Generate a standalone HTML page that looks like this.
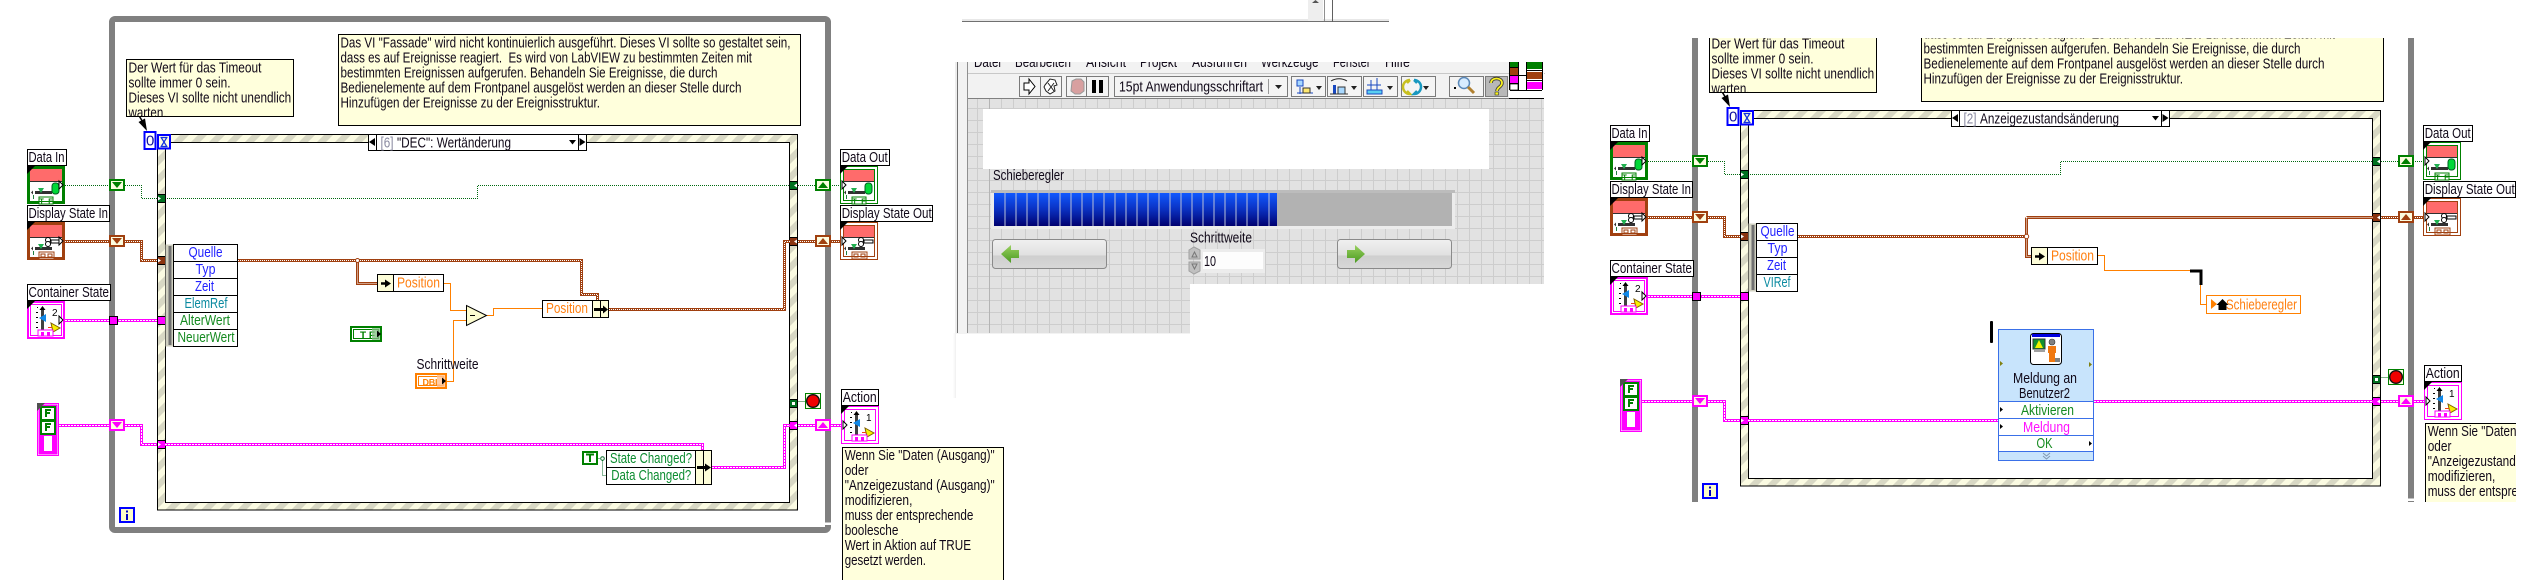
<!DOCTYPE html>
<html>
<head>
<meta charset="utf-8">
<style>
html,body{margin:0;padding:0;background:#fff;width:2547px;height:580px;overflow:hidden}
svg{display:block}
text{font-family:"Liberation Sans",sans-serif;font-size:15px;fill:#100818}
.b{fill:#2222ff}.t{fill:#0a8aa0}.g{fill:#158a20}.o{fill:#ff7f10}.gr{fill:#8888a0}.m{fill:#ff10ff}
.gt{fill:#0c8c30}
</style>
</head>
<body>
<svg xmlns="http://www.w3.org/2000/svg" width="2547" height="580" viewBox="0 0 2547 580">
<defs>
<pattern id="st" width="18" height="18" patternUnits="userSpaceOnUse">
<rect width="18" height="18" fill="#fbfbe2"/>
<polygon points="9,0 18,0 0,18 0,9" fill="#d8d8c4"/>
<polygon points="18,9 18,18 9,18" fill="#d8d8c4"/>
</pattern>
<pattern id="grid" width="12" height="12" patternUnits="userSpaceOnUse" x="965" y="0">
<rect width="12" height="12" fill="#e2e2e2"/>
<rect x="0" width="1" height="12" fill="#cdcdcd"/>
<rect y="0" width="12" height="1" fill="#cdcdcd"/>
</pattern>
<linearGradient id="blue" x1="0" y1="0" x2="0" y2="1"><stop offset="0" stop-color="#1058ff"/><stop offset=".5" stop-color="#0a30c0"/><stop offset="1" stop-color="#000070"/></linearGradient>
<linearGradient id="btn" x1="0" y1="0" x2="0" y2="1"><stop offset="0" stop-color="#f0f0f0"/><stop offset=".55" stop-color="#e0e0e0"/><stop offset=".56" stop-color="#cecece"/><stop offset="1" stop-color="#d8d8d8"/></linearGradient>
<linearGradient id="arr" x1="0" y1="0" x2="0" y2="1"><stop offset="0" stop-color="#9ad060"/><stop offset="1" stop-color="#4a9a20"/></linearGradient>
<linearGradient id="sh" x1="0" y1="0" x2="1" y2="0"><stop offset="0" stop-color="#fff"/><stop offset="1" stop-color="#f0f0f0"/></linearGradient>
<clipPath id="rc"><rect x="1600" y="38" width="916" height="464"/></clipPath>
<clipPath id="n1c"><rect x="126" y="59" width="168" height="57"/></clipPath>
<clipPath id="menu"><rect x="967" y="62" width="545" height="11"/></clipPath>

<g id="mech">
<rect x="3" y="3" width="32" height="12" fill="#ff6b6b"/>
<rect x="3" y="15" width="32" height="1" fill="#303030"/>
<rect x="8" y="25" width="17" height="3" fill="#303030"/>
<polygon points="11,22 17,22 14,27" fill="#20b050"/>
<polygon points="4,26.5 6,24.5 6,28.5" fill="#303030"/>
<rect x="6" y="29" width="1" height="4" fill="#208040"/>
</g>
<g id="dataIco">
<rect x="3" y="3" width="32" height="32" fill="#fff"/>
<use href="#mech"/>
<rect x="25" y="17" width="7" height="11" rx="3" fill="#00d838" stroke="#006020"/>
<rect x="12" y="31" width="14" height="7" fill="#fff" stroke="#008000"/>
<text x="12.5" y="37.5" style="font-size:7px;font-weight:bold;fill:#008000" textLength="13" lengthAdjust="spacing">T F</text>
</g>
<g id="stateIco">
<rect x="3" y="3" width="32" height="32" fill="#fff"/>
<use href="#mech"/>
<circle cx="21" cy="18" r="2.5" fill="#fff" stroke="#000"/>
<circle cx="21" cy="22" r="2.5" fill="#fff" stroke="#000"/>
<rect x="24" y="18" width="9" height="3" fill="#fff" stroke="#000"/>
<rect x="12" y="30" width="15" height="7" fill="#fff" stroke="#a04010"/>
<rect x="14" y="32" width="4" height="3" fill="none" stroke="#a04010"/><rect x="21" y="32" width="4" height="3" fill="none" stroke="#a04010"/>
</g>
<polygon id="corner" points="0,0 8,0 0,8" fill="#000"/>
<polygon id="inArr" points="0,0 4,4 0,8" fill="#fff" stroke="#000"/>

<g id="sliderIco">
<rect x="10" y="6" width="1" height="1" fill="#000"/><rect x="9" y="11" width="2" height="1" fill="#000"/><rect x="9" y="16" width="2" height="1" fill="#000"/><rect x="9" y="21" width="2" height="1" fill="#000"/><rect x="9" y="26" width="2" height="1" fill="#000"/>
<rect x="14" y="9" width="3" height="20" fill="#404040"/>
<polygon points="15.5,5 12.5,9 18.5,9" fill="#000"/>
<polygon points="12,17 19,13 19,21" fill="#1088e8"/>
<polygon points="24,22 33,27 26,31" fill="#f8f000" stroke="#806000"/>
<rect x="21" y="26" width="4" height="1" fill="#f04010"/>
<rect x="11" y="29" width="15" height="6" fill="#fff" stroke="#ff00ff"/>
<rect x="14" y="31" width="3" height="4" fill="#ff00ff"/><rect x="20" y="31" width="3" height="4" fill="#ff00ff"/>
</g>

<g id="common">
<rect x="112" y="19" width="716" height="511" rx="3" fill="none" stroke="#808080" stroke-width="6"/>
<rect x="824" y="522.5" width="8" height="2.5" fill="#fff"/>
<rect x="157.5" y="134.5" width="640" height="375.5" fill="url(#st)" stroke="#000"/>
<rect x="165.5" y="142.5" width="624" height="360" fill="#fff" stroke="#000"/>

<rect x="368.5" y="134.5" width="218" height="16" fill="#fff" stroke="#000"/>
<rect x="368.5" y="134.5" width="8" height="16" fill="#fff" stroke="#000"/>
<rect x="578.5" y="134.5" width="8" height="16" fill="#fff" stroke="#000"/>
<polygon points="369,142 375,138 375,146" fill="#000"/>
<polygon points="585.5,142 579.5,138 579.5,146" fill="#000"/>
<polygon points="569,140 576,140 572.5,144.5" fill="#000"/>

<rect x="144.5" y="132" width="11" height="17" fill="#fff" stroke="#0000ff" stroke-width="2"/>
<rect x="158" y="135" width="12" height="13.5" fill="#fdfde0" stroke="#0000ff" stroke-width="2"/>
<path d="M160.5 137.5h7M160.5 146.5h7M161.5 138l5 8M166.5 138l-5 8" stroke="#1030e0" stroke-width="1.2" fill="none"/>
<polygon points="138.5,122 145,118.5 147,131" fill="#000"/>
<path d="M139.5 116.5L144 124" stroke="#000" stroke-width="1.5"/>

<path d="M65 185.5H141.5V198.5H157M165 198.5H477.5V185.5H790M798 185.5H840" fill="none" stroke="#006810" stroke-dasharray="1 1"/>
<path d="M65 241.5H141.5V260.5H157M798 241.5H840" fill="none" stroke="#a04010" stroke-width="3"/>
<path d="M65 241.5H141.5V260.5H157M798 241.5H840" fill="none" stroke="#fff" stroke-dasharray="1 1"/>
<path d="M65 320.5H157M59 425.5H141.5V444.5H157M798 425.5H841" fill="none" stroke="#ff00ff" stroke-width="3"/>
<path d="M65 320.5H157M59 425.5H141.5V444.5H157M798 425.5H841" fill="none" stroke="#fff" stroke-dasharray="2 1"/>
<path d="M798.5 401.5H805" stroke="#006810" stroke-dasharray="1 1"/>

<rect x="110" y="180" width="14" height="10" fill="#fdfde0" stroke="#008000" stroke-width="2"/>
<polygon points="112,182 122,182 117,188" fill="#008000"/>
<rect x="110" y="236" width="14" height="10" fill="#fdfde0" stroke="#a04010" stroke-width="2"/>
<polygon points="112,238 122,238 117,244" fill="#a04010"/>
<rect x="110" y="420" width="14" height="10" fill="#fdfde0" stroke="#ff00ff" stroke-width="2"/>
<polygon points="112,422 122,422 117,428" fill="#ff00ff"/>
<rect x="109.5" y="316.5" width="8" height="8" fill="#ff00ff" stroke="#000"/>
<rect x="816" y="180" width="14" height="10" fill="#fdfde0" stroke="#008000" stroke-width="2"/>
<polygon points="818,188 828,188 823,182" fill="#008000"/>
<rect x="816" y="236" width="14" height="10" fill="#fdfde0" stroke="#a04010" stroke-width="2"/>
<polygon points="818,244 828,244 823,238" fill="#a04010"/>
<rect x="816" y="420" width="14" height="10" fill="#fdfde0" stroke="#ff00ff" stroke-width="2"/>
<polygon points="818,428 828,428 823,422" fill="#ff00ff"/>

<rect x="157.5" y="194.5" width="8" height="8" fill="#007020" stroke="#000"/><polygon points="158,196.5 161,198.5 158,200.5" fill="#fff"/>
<rect x="157.5" y="256.5" width="8" height="8" fill="#8a3410" stroke="#000"/><polygon points="158,258.5 161,260.5 158,262.5" fill="#fff"/>
<rect x="157.5" y="316.5" width="8" height="8" fill="#ff00ff" stroke="#000"/>
<rect x="157.5" y="440.5" width="8" height="8" fill="#ff00ff" stroke="#000"/><polygon points="158,442.5 161,444.5 158,446.5" fill="#fff"/>
<rect x="789.5" y="181.5" width="8" height="8" fill="#007020" stroke="#000"/><polygon points="797,183.5 794,185.5 797,187.5" fill="#fff"/>
<rect x="789.5" y="237.5" width="8" height="8" fill="#8a3410" stroke="#000"/><polygon points="797,239.5 794,241.5 797,243.5" fill="#fff"/>
<rect x="789.5" y="399.5" width="8" height="8" fill="#007020" stroke="#000"/><rect x="792" y="402" width="3" height="3" fill="#fff"/>
<rect x="789.5" y="421.5" width="8" height="8" fill="#ff00ff" stroke="#000"/><polygon points="797,423.5 794,425.5 797,427.5" fill="#fff"/>

<rect x="805.5" y="393.5" width="15" height="15" fill="#fdfde0" stroke="#008000"/>
<circle cx="813" cy="401" r="6.3" fill="#f00000" stroke="#101010" stroke-width="1.4"/>

<rect x="120" y="508" width="14" height="14" fill="#fdfdc8" stroke="#0000ff" stroke-width="2"/>
<rect x="126" y="514" width="2" height="6" fill="#0000c0"/><rect x="126" y="510.5" width="2" height="2" fill="#0000c0"/>

<rect x="27.5" y="149.5" width="39" height="16" fill="#fff" stroke="#000"/>
<rect x="27.5" y="205.5" width="82" height="16" fill="#fff" stroke="#000"/>
<rect x="27.5" y="284.5" width="83" height="16" fill="#fff" stroke="#000"/>
<rect x="840.5" y="149.5" width="49" height="16" fill="#fff" stroke="#000"/>
<rect x="840.5" y="205.5" width="92" height="16" fill="#fff" stroke="#000"/>
<rect x="841.5" y="389.5" width="37" height="16" fill="#fff" stroke="#000"/>

<g transform="translate(27,166)"><rect x="1" y="1" width="36" height="36" fill="#fff" stroke="#008000" stroke-width="2"/><use href="#dataIco"/><rect x="2.5" y="2.5" width="33" height="33" fill="none" stroke="#008000"/><use href="#corner"/><use href="#inArr" x="32" y="15"/></g>
<g transform="translate(27,222)"><rect x="1" y="1" width="36" height="36" fill="#fff" stroke="#a04010" stroke-width="2"/><use href="#stateIco"/><rect x="2.5" y="2.5" width="33" height="33" fill="none" stroke="#a04010"/><use href="#corner"/><use href="#inArr" x="32" y="15"/></g>
<g transform="translate(27,301)"><rect x="1" y="1" width="36" height="36" fill="#fff" stroke="#ff00ff" stroke-width="2"/><rect x="3.5" y="3.5" width="31" height="31" fill="none" stroke="#ff00ff"/><use href="#sliderIco"/><text x="25" y="15" style="font-size:10px;fill:#000">2</text><use href="#corner"/><use href="#inArr" x="32" y="15"/></g>
<g transform="translate(840,166)"><rect x=".5" y=".5" width="37" height="37" fill="#fff" stroke="#008000"/><use href="#dataIco"/><rect x="3.5" y="3.5" width="31" height="31" fill="none" stroke="#008000"/><use href="#corner"/><use href="#inArr" x="2" y="15"/></g>
<g transform="translate(840,222)"><rect x=".5" y=".5" width="37" height="37" fill="#fff" stroke="#a04010"/><use href="#stateIco"/><rect x="3.5" y="3.5" width="31" height="31" fill="none" stroke="#a04010"/><use href="#corner"/><use href="#inArr" x="2" y="15"/></g>
<g transform="translate(841,406)"><rect x=".5" y=".5" width="37" height="37" fill="#fff" stroke="#ff00ff"/><rect x="3.5" y="3.5" width="31" height="31" fill="none" stroke="#ff00ff"/><use href="#sliderIco"/><text x="25" y="15" style="font-size:10px;fill:#000">1</text><use href="#corner"/><use href="#inArr" x="2" y="15"/></g>

<rect x="37.5" y="403.5" width="21" height="52" fill="#fff" stroke="#ff00ff"/>
<rect x="39.5" y="405.5" width="17" height="48" fill="none" stroke="#ff00ff" stroke-width="2"/>
<rect x="41" y="407" width="14" height="13" fill="#fff" stroke="#008000" stroke-width="2"/>
<rect x="41" y="421" width="14" height="13" fill="#fff" stroke="#008000" stroke-width="2"/>
<path d="M46 417v-7h5M46 413h4M46 431v-7h5M46 427h4" fill="none" stroke="#008000" stroke-width="2"/>
<rect x="40" y="435" width="16" height="18" fill="#ff00ff"/>
<rect x="44" y="436" width="8" height="15" fill="#fff"/>
<polygon points="37,403 45,403 37,411" fill="#505050"/>
</g>
</defs>

<rect width="2547" height="580" fill="#fff"/>

<use href="#common"/>
<g>
<path d="M238 260.5H581.5V294.5H597.5V300M357.5 260.5V283.5H378M609 309.5H784.5V241.5H790" fill="none" stroke="#a04010" stroke-width="3"/>
<path d="M238 260.5H581.5V294.5H597.5V300M357.5 260.5V283.5H378M609 309.5H784.5V241.5H790" fill="none" stroke="#fff" stroke-dasharray="1 1"/>
<circle cx="357.5" cy="260.5" r="2" fill="#fff" stroke="#a04010"/>
<path d="M165 444.5H702.5V450M712 467.5H784.5V425.5H790" fill="none" stroke="#ff00ff" stroke-width="3"/>
<path d="M165 444.5H702.5V450M712 467.5H784.5V425.5H790" fill="none" stroke="#fff" stroke-dasharray="2 1"/>
<path d="M444 283.5H450.5V310.5H466M447 381.5H453.5V320.5H466M487 315.5H493.5V308.5H542" fill="none" stroke="#ff8000"/>
<path d="M598.5 458.5H602.5V475.5H607" fill="none" stroke="#107030" stroke-dasharray="1 1"/>
<circle cx="602.5" cy="458.5" r="1.8" fill="#fff" stroke="#107030"/>

<rect x="165.5" y="244.5" width="8" height="102" fill="#d0d0c0"/>
<rect x="168.5" y="246" width="3" height="99" fill="#707070"/>
<rect x="173.5" y="244.5" width="64" height="102" fill="#fff" stroke="#000"/>
<path d="M174 261.5h63M174 278.5h63M174 295.5h63M174 312.5h63M174 329.5h63" stroke="#000"/>
<text class="b" x="188.5" y="257" textLength="34" lengthAdjust="spacingAndGlyphs">Quelle</text>
<text class="b" x="195.5" y="274" textLength="20" lengthAdjust="spacingAndGlyphs">Typ</text>
<text class="b" x="195" y="291" textLength="19" lengthAdjust="spacingAndGlyphs">Zeit</text>
<text class="t" x="184.5" y="308" textLength="43" lengthAdjust="spacingAndGlyphs">ElemRef</text>
<text class="g" x="180" y="325" textLength="50" lengthAdjust="spacingAndGlyphs">AlterWert</text>
<text class="g" x="177.5" y="342" textLength="57" lengthAdjust="spacingAndGlyphs">NeuerWert</text>

<rect x="377.5" y="274.5" width="66" height="17" fill="#fff" stroke="#000"/>
<rect x="377.5" y="274.5" width="16" height="17" fill="#fdfdd8" stroke="#000"/>
<path d="M381 283.5h5" stroke="#000" stroke-width="2.5"/><polygon points="385,279.5 391,283.5 385,287.5" fill="#000"/>
<text class="o" x="397" y="287.5" textLength="43" lengthAdjust="spacingAndGlyphs">Position</text>

<polygon points="466.5,305.5 466.5,325.5 486.5,315.5" fill="#fdfdd0" stroke="#000"/>
<rect x="470" y="315" width="5" height="1" fill="#000"/>

<rect x="351" y="327" width="30" height="14" fill="#fff" stroke="#008000" stroke-width="2"/>
<rect x="353.5" y="329.5" width="25" height="9" fill="#fff" stroke="#008000"/>
<text x="360" y="338.5" style="font-size:10px;font-weight:bold;fill:#008000" textLength="15" lengthAdjust="spacing">TF</text>
<rect x="372" y="328" width="8" height="12" fill="#80c080" opacity=".75"/>
<polygon points="377,330.5 381,334 377,337.5" fill="#000"/>

<text x="416.5" y="369" textLength="62" lengthAdjust="spacingAndGlyphs">Schrittweite</text>
<rect x="416" y="374" width="30" height="14" fill="#fff" stroke="#ff8000" stroke-width="2"/>
<rect x="418.5" y="376.5" width="25" height="9" fill="#fff" stroke="#ff8000"/>
<text x="422.5" y="385.5" style="font-size:9px;font-weight:bold;fill:#ff8000" textLength="18" lengthAdjust="spacing">DBL</text>
<rect x="437" y="375" width="8" height="12" fill="#ffc090" opacity=".8"/>
<polygon points="442,377.5 446,381 442,384.5" fill="#000"/>

<rect x="542.5" y="300.5" width="66" height="17" fill="#fff" stroke="#000"/>
<rect x="592.5" y="300.5" width="8" height="17" fill="#fdfdd8" stroke="#000"/>
<rect x="600.5" y="300.5" width="8" height="17" fill="#fdfdd8" stroke="#000"/>
<path d="M594 309.5h11" stroke="#000" stroke-width="3"/><polygon points="603,305.5 608,309.5 603,313.5" fill="#000"/>
<text class="o" x="546" y="313" textLength="42" lengthAdjust="spacingAndGlyphs">Position</text>

<rect x="583" y="452" width="14" height="12" fill="#fff" stroke="#008000" stroke-width="2"/>
<path d="M586 454.5h8M590 454.5v7.5" stroke="#008000" stroke-width="2"/>
<rect x="606.5" y="450.5" width="105" height="34" fill="#fff" stroke="#000"/>
<path d="M607 467.5h88" stroke="#000"/>
<rect x="695.5" y="450.5" width="8" height="34" fill="#fdfdd8" stroke="#000"/>
<rect x="703.5" y="450.5" width="8" height="34" fill="#fdfdd8" stroke="#000"/>
<path d="M697 467.5h12" stroke="#000" stroke-width="3"/><polygon points="705,463.5 711,467.5 705,471.5" fill="#000"/>
<text class="gt" x="610" y="463" textLength="82" lengthAdjust="spacingAndGlyphs">State Changed?</text>
<text class="gt" x="611.3" y="480" textLength="80" lengthAdjust="spacingAndGlyphs">Data Changed?</text>

<text class="gr" x="380.5" y="147.3" textLength="13" lengthAdjust="spacingAndGlyphs">[6]</text>
<text x="397" y="147.3" textLength="114" lengthAdjust="spacingAndGlyphs">"DEC": Wertänderung</text>
<text x="146" y="145.5" style="fill:#1010a0">0</text>

<text x="28.5" y="162" textLength="36" lengthAdjust="spacingAndGlyphs">Data In</text>
<text x="28.5" y="218" textLength="79.5" lengthAdjust="spacingAndGlyphs">Display State In</text>
<text x="28.5" y="297" textLength="80.5" lengthAdjust="spacingAndGlyphs">Container State</text>
<text x="841.7" y="162" textLength="46" lengthAdjust="spacingAndGlyphs">Data Out</text>
<text x="841.7" y="218" textLength="90" lengthAdjust="spacingAndGlyphs">Display State Out</text>
<text x="842.7" y="402" textLength="34" lengthAdjust="spacingAndGlyphs">Action</text>

<rect x="126.5" y="59.5" width="167" height="57" fill="#ffffdc" stroke="#000"/>
<g clip-path="url(#n1c)">
<text x="128.5" y="72.7" textLength="133" lengthAdjust="spacingAndGlyphs">Der Wert für das Timeout</text>
<text x="128.5" y="87.7" textLength="102" lengthAdjust="spacingAndGlyphs">sollte immer 0 sein.</text>
<text x="128.5" y="102.7" textLength="162.7" lengthAdjust="spacingAndGlyphs">Dieses VI sollte nicht unendlich</text>
<text x="128.5" y="117.7" textLength="38" lengthAdjust="spacingAndGlyphs">warten.</text>
</g>
<rect x="338.5" y="34.5" width="462" height="91" fill="#ffffdc" stroke="#000"/>
<text x="340.5" y="47.5" textLength="450" lengthAdjust="spacingAndGlyphs">Das VI "Fassade" wird nicht kontinuierlich ausgeführt. Dieses VI sollte so gestaltet sein,</text>
<text x="340.5" y="62.5" textLength="411.5" lengthAdjust="spacingAndGlyphs" xml:space="preserve">dass es auf Ereignisse reagiert.  Es wird von LabVIEW zu bestimmten Zeiten mit</text>
<text x="340.5" y="77.5" textLength="377" lengthAdjust="spacingAndGlyphs">bestimmten Ereignissen aufgerufen. Behandeln Sie Ereignisse, die durch</text>
<text x="340.5" y="92.5" textLength="401" lengthAdjust="spacingAndGlyphs">Bedienelemente auf dem Frontpanel ausgelöst werden an dieser Stelle durch</text>
<text x="340.5" y="107.5" textLength="259.5" lengthAdjust="spacingAndGlyphs">Hinzufügen der Ereignisse zu der Ereignisstruktur.</text>
<rect x="842.5" y="447.5" width="161" height="140" fill="#ffffdc" stroke="#000"/>
<text x="844.7" y="460" textLength="150" lengthAdjust="spacingAndGlyphs">Wenn Sie "Daten (Ausgang)"</text>
<text x="844.7" y="475" textLength="23.7" lengthAdjust="spacingAndGlyphs">oder</text>
<text x="844.7" y="490" textLength="150" lengthAdjust="spacingAndGlyphs">"Anzeigezustand (Ausgang)"</text>
<text x="844.7" y="505" textLength="67.7" lengthAdjust="spacingAndGlyphs">modifizieren,</text>
<text x="844.7" y="520" textLength="128.7" lengthAdjust="spacingAndGlyphs">muss der entsprechende</text>
<text x="844.7" y="535" textLength="53.7" lengthAdjust="spacingAndGlyphs">boolesche</text>
<text x="844.7" y="550" textLength="126.3" lengthAdjust="spacingAndGlyphs">Wert in Aktion auf TRUE</text>
<text x="844.7" y="565" textLength="81.3" lengthAdjust="spacingAndGlyphs">gesetzt werden.</text>
</g>

<g>
<rect x="962" y="19" width="427" height="2" fill="#e8e8e8"/>
<rect x="962" y="21" width="427" height="1" fill="#707070"/>
<rect x="1308" y="0" width="15" height="21" fill="#eeeeee"/>
<rect x="1324" y="0" width="1" height="21" fill="#909090"/>
<rect x="1332" y="0" width="1" height="22" fill="#606060"/>
<polygon points="1312,3 1319,3 1315.5,0" fill="#555"/>

<rect x="955" y="62" width="590" height="272" fill="#f2f2f2"/>
<rect x="1190" y="284" width="356" height="50" fill="#fff"/>
<rect x="953" y="333" width="3" height="65" fill="url(#sh)"/>
<rect x="955" y="62" width="2" height="271" fill="#ededed"/>
<rect x="957" y="62" width="1" height="271" fill="#707070"/>
<rect x="967" y="62" width="1" height="271" fill="#909090"/>
<rect x="968" y="99" width="577" height="234" fill="url(#grid)"/>
<rect x="1190" y="284" width="356" height="50" fill="#fff"/>
<rect x="989" y="99" width="1" height="234" fill="#b4b4b4"/>
<rect x="1544" y="62" width="3" height="222" fill="#fff"/>

<rect x="968" y="73" width="577" height="1" fill="#c8c8c8"/>
<rect x="968" y="98" width="576" height="1" fill="#808080"/>
<g clip-path="url(#menu)">
<text x="974" y="67" textLength="27" lengthAdjust="spacingAndGlyphs">Datei</text>
<text x="1015" y="67" textLength="56" lengthAdjust="spacingAndGlyphs">Bearbeiten</text>
<text x="1086" y="67" textLength="40" lengthAdjust="spacingAndGlyphs">Ansicht</text>
<text x="1140" y="67" textLength="37" lengthAdjust="spacingAndGlyphs">Projekt</text>
<text x="1192" y="67" textLength="55" lengthAdjust="spacingAndGlyphs">Ausführen</text>
<text x="1261" y="67" textLength="57.5" lengthAdjust="spacingAndGlyphs">Werkzeuge</text>
<text x="1333" y="67" textLength="37.5" lengthAdjust="spacingAndGlyphs">Fenster</text>
<text x="1385" y="67" textLength="25" lengthAdjust="spacingAndGlyphs">Hilfe</text>
</g>

<g fill="#f4f4f4" stroke="#7a7a7a">
<rect x="1019.5" y="76.5" width="21" height="20"/>
<rect x="1040.5" y="76.5" width="21" height="20"/>
<rect x="1066.5" y="76.5" width="20" height="20"/>
<rect x="1086.5" y="76.5" width="22" height="20"/>
<rect x="1114.5" y="76.5" width="173" height="20"/>
<rect x="1291.5" y="76.5" width="34" height="20"/>
<rect x="1327.5" y="76.5" width="34" height="20"/>
<rect x="1363.5" y="76.5" width="34" height="20"/>
<rect x="1401.5" y="76.5" width="34" height="20"/>
<rect x="1449.5" y="76.5" width="34" height="20"/>
<rect x="1485.5" y="76.5" width="22" height="20" fill="#b8b8b8"/>
</g>
<path d="M1024 83h5v-4l6 7.5-6 7.5v-4h-5z" fill="#fff" stroke="#000"/>
<path d="M1045 85l5-6 5 1 2 5-3 1 1 5-5 3-4-3-2-4z M1048 83l6 8M1054 83l-6 8" fill="#fff" stroke="#222"/>
<polygon points="1072,81 1076,79 1081,79 1084,82 1084,91 1080,94 1075,94 1071,91" fill="#d8a0a0" stroke="#999"/>
<rect x="1092" y="80" width="4" height="13" fill="#000"/><rect x="1099" y="80" width="4" height="13" fill="#000"/>
<rect x="1268" y="79" width="1" height="15" fill="#999"/>
<polygon points="1275,85 1282,85 1278.5,89" fill="#222"/>
<text x="1119" y="91.5" textLength="144" lengthAdjust="spacingAndGlyphs">15pt Anwendungsschriftart</text>

<path d="M1297 80h6v6h-6zM1300 87v7M1297 93h16" stroke="#1848c0" fill="#a8d8ff"/><rect x="1303" y="88" width="7" height="5" fill="#ffe870" stroke="#333"/>
<polygon points="1316,86 1322,86 1319,90" fill="#222"/>
<path d="M1331 81c5-3 11-3 16 0" fill="none" stroke="#222"/><rect x="1333" y="85" width="3" height="9" fill="#1848c0"/><rect x="1338" y="87" width="7" height="7" fill="#a8d8ff" stroke="#333"/><path d="M1330 94h18" stroke="#333"/>
<polygon points="1351,86 1357,86 1354,90" fill="#222"/>
<path d="M1367 85h14M1371 80v10M1377 78v12" stroke="#1848c0" fill="none"/><rect x="1367" y="90" width="15" height="4" fill="#5ad0f0" stroke="#1848c0"/>
<polygon points="1387,86 1393,86 1390,90" fill="#222"/>
<path d="M1410 80a7 7 0 0 0 0 14l-3-3M1410 80l-3 3" fill="none" stroke="#c8c020" stroke-width="2.5"/>
<path d="M1414 80a7 7 0 0 1 0 14l3-3M1414 80l3 3" fill="none" stroke="#1898c0" stroke-width="2.5"/>
<polygon points="1423,86 1429,86 1426,90" fill="#222"/>
<circle cx="1464" cy="83" r="5.5" fill="#d8ecff" stroke="#5a88b8" stroke-width="1.5"/><path d="M1468 87l6 6" stroke="#b08030" stroke-width="3"/><rect x="1454" y="87" width="2" height="2" fill="#000"/>
<path d="M1491 83c0-6 11-6 11 0 0 4-5 4-5 8" fill="none" stroke="#333" stroke-width="3.4"/><path d="M1491 83c0-6 11-6 11 0 0 4-5 4-5 8" fill="none" stroke="#f8f020" stroke-width="1.8"/><rect x="1495" y="92" width="3.5" height="3" fill="#f8f020" stroke="#333" stroke-width=".6"/>

<rect x="1509" y="62" width="35" height="37" fill="#fff"/>
<rect x="1510" y="62" width="8" height="5" fill="#008000"/>
<rect x="1510" y="68" width="8" height="7" fill="#a04010"/>
<rect x="1510" y="76" width="8" height="7" fill="#ff00ff"/>
<rect x="1510" y="84" width="8" height="6" fill="#fff" stroke="#000" stroke-width=".7"/>
<rect x="1527" y="62" width="15" height="7" fill="#008000"/>
<rect x="1527" y="72" width="15" height="7" fill="#a04010"/>
<rect x="1527" y="82" width="15" height="7" fill="#ff00ff"/>
<path d="M1509.5 62v28M1518.5 62v28M1526.5 62v28M1542.5 62v28M1510 67.5h8M1510 75.5h8M1510 83.5h8M1510 90.5h32M1527 70.5h15M1527 80.5h15M1518 75.5h9" stroke="#000" fill="none"/>
<rect x="1509" y="98" width="35" height="1" fill="#000"/>

<rect x="983" y="109" width="506" height="60" fill="#fff"/>

<text x="993" y="180" textLength="71" lengthAdjust="spacingAndGlyphs">Schieberegler</text>

<rect x="991" y="190" width="464" height="39" fill="#ececec"/>
<rect x="991" y="190" width="464" height="3" fill="#bcbcbc"/>
<rect x="994" y="193" width="458" height="33" fill="#b2b2b2"/>
<rect x="994" y="193" width="283" height="33" fill="url(#blue)"/>
<path d="M1005 193v33M1016 193v33M1027 193v33M1038 193v33M1049 193v33M1060 193v33M1071 193v33M1082 193v33M1093 193v33M1104 193v33M1115 193v33M1126 193v33M1137 193v33M1148 193v33M1159 193v33M1170 193v33M1181 193v33M1192 193v33M1203 193v33M1214 193v33M1225 193v33M1236 193v33M1247 193v33M1258 193v33M1269 193v33" stroke="#b8c0d8" stroke-width="1"/>

<text x="1190" y="242.5" textLength="62" lengthAdjust="spacingAndGlyphs">Schrittweite</text>

<rect x="992.5" y="239.5" width="114" height="29" rx="3" fill="url(#btn)" stroke="#8a8a8a"/>
<polygon points="1001,254 1011,245 1011,250 1019,250 1019,258 1011,258 1011,263" fill="url(#arr)"/>
<rect x="1337.5" y="239.5" width="114" height="29" rx="3" fill="url(#btn)" stroke="#8a8a8a"/>
<polygon points="1365,254 1355,245 1355,250 1347,250 1347,258 1355,258 1355,263" fill="url(#arr)"/>

<rect x="1200" y="249" width="65" height="24" fill="#ececec"/>
<rect x="1203" y="252" width="60" height="17" fill="#fdfdfd"/>
<path d="M1189 250l5-3 6 3v9h-11zM1189 262h11v9l-6 3-5-3z" fill="#c0c0c0" stroke="#a0a0a0"/>
<polygon points="1192,257 1194.5,252 1197,257" fill="none" stroke="#777"/>
<polygon points="1192,264 1194.5,269 1197,264" fill="none" stroke="#777"/>
<text x="1204" y="266" textLength="12" lengthAdjust="spacingAndGlyphs">10</text>
</g>

<g clip-path="url(#rc)">
<g transform="translate(1583,-24)">
<use href="#common"/>
</g>
<path d="M1748 420.5H1998M2094 401.5H2373" fill="none" stroke="#ff00ff" stroke-width="3"/>
<path d="M1748 420.5H1998M2094 401.5H2373" fill="none" stroke="#fff" stroke-dasharray="2 1"/>
<path d="M1798 236.5H2026.5M2026.5 217.5H2373M2026.5 217.5V256.5H2034" fill="none" stroke="#a04010" stroke-width="3"/>
<path d="M1798 236.5H2026.5M2026.5 217.5H2373M2026.5 217.5V256.5H2034" fill="none" stroke="#fff" stroke-dasharray="1 1"/>
<circle cx="2026.5" cy="236.5" r="2.2" fill="#fff" stroke="#a04010"/>
<path d="M2098 255.5H2104.5V270.5H2190M2200.5 285V304.5H2206" fill="none" stroke="#ff8000"/>
<path d="M2190 271H2201V285" fill="none" stroke="#000" stroke-width="3"/>

<rect x="1748.5" y="223.5" width="8" height="68" fill="#d0d0c0"/>
<rect x="1751.5" y="225" width="3" height="65" fill="#707070"/>
<rect x="1756.5" y="223.5" width="41" height="68" fill="#fff" stroke="#000"/>
<path d="M1757 240.5h40M1757 257.5h40M1757 274.5h40" stroke="#000"/>
<text class="b" x="1760.5" y="236" textLength="34" lengthAdjust="spacingAndGlyphs">Quelle</text>
<text class="b" x="1767.5" y="253" textLength="20" lengthAdjust="spacingAndGlyphs">Typ</text>
<text class="b" x="1767" y="270" textLength="19" lengthAdjust="spacingAndGlyphs">Zeit</text>
<text class="t" x="1763.5" y="287" textLength="27" lengthAdjust="spacingAndGlyphs">VIRef</text>

<rect x="2031.5" y="247.5" width="66" height="17" fill="#fff" stroke="#000"/>
<rect x="2031.5" y="247.5" width="16" height="17" fill="#fdfdd8" stroke="#000"/>
<path d="M2035 256.5h5" stroke="#000" stroke-width="2.5"/><polygon points="2039,252.5 2045,256.5 2039,260.5" fill="#000"/>
<text class="o" x="2051" y="260.5" textLength="43" lengthAdjust="spacingAndGlyphs">Position</text>

<rect x="2206.5" y="295.5" width="94" height="18" fill="#fff" stroke="#ff8000"/>
<polygon points="2211,299 2211,309 2217,304" fill="#ff8000"/>
<path d="M2222.5 299l-6 6h2v5h8v-5h2z" fill="#000"/>
<text class="o" x="2226" y="309.5" textLength="71" lengthAdjust="spacingAndGlyphs">Schieberegler</text>

<rect x="1990" y="321" width="3" height="22" rx="1" fill="#000"/>

<rect x="1998.5" y="329.5" width="95" height="131" fill="#c8e4fc" stroke="#3a70e8"/>
<rect x="1999" y="402" width="94" height="16" fill="#fff"/>
<rect x="1999" y="419" width="94" height="16" fill="#fff"/>
<rect x="1999" y="436" width="94" height="15" fill="#fff"/>
<path d="M1999 401.5h94M1999 418.5h94M1999 435.5h94M1999 451.5h94" stroke="#3a70e8"/>
<rect x="2030.5" y="333.5" width="31" height="31" rx="3" fill="#fff" stroke="#000"/>
<rect x="2032" y="334" width="28" height="3" fill="#0000e0"/>
<rect x="2033" y="339" width="12" height="10" fill="#109030" stroke="#333"/>
<polygon points="2039,340 2043,348 2035,348" fill="#f0f000"/>
<rect x="2034" y="350" width="11" height="2" fill="#a0a0a0"/>
<circle cx="2052" cy="342" r="3" fill="#808080" stroke="#333" stroke-width=".6"/>
<path d="M2048 346h8v7h-1v9h-6v-9h-1z" fill="#f07810"/>
<rect x="2055" y="358" width="5" height="4" fill="#808080"/>
<polygon points="2000,361 2000,366 2003,363.5" fill="#808010"/>
<polygon points="2089,362 2089,367 2092,364.5" fill="#808010"/>
<text x="2013" y="383" textLength="64" lengthAdjust="spacingAndGlyphs">Meldung an</text>
<text x="2019" y="398" textLength="51" lengthAdjust="spacingAndGlyphs">Benutzer2</text>
<text class="g" x="2021" y="415" textLength="53" lengthAdjust="spacingAndGlyphs">Aktivieren</text>
<text class="m" x="2023" y="432" textLength="47" lengthAdjust="spacingAndGlyphs">Meldung</text>
<text class="g" x="2036.5" y="448" textLength="16" lengthAdjust="spacingAndGlyphs">OK</text>
<polygon points="2000,407 2000,412 2003,409.5" fill="#000"/>
<polygon points="2000,424 2000,429 2003,426.5" fill="#000"/>
<polygon points="2089,441 2089,446 2092,443.5" fill="#000"/>
<path d="M2043 453l3.5 3 3.5-3M2043 456l3.5 3 3.5-3" fill="none" stroke="#8098b0"/>

<text class="gr" x="1963.5" y="123.3" textLength="13" lengthAdjust="spacingAndGlyphs">[2]</text>
<text x="1980" y="123.3" textLength="139" lengthAdjust="spacingAndGlyphs">Anzeigezustandsänderung</text>
<text x="1729" y="121.5" style="fill:#1010a0">0</text>

<text x="1611.5" y="138" textLength="36" lengthAdjust="spacingAndGlyphs">Data In</text>
<text x="1611.5" y="194" textLength="79.5" lengthAdjust="spacingAndGlyphs">Display State In</text>
<text x="1611.5" y="273" textLength="80.5" lengthAdjust="spacingAndGlyphs">Container State</text>
<text x="2424.7" y="138" textLength="46" lengthAdjust="spacingAndGlyphs">Data Out</text>
<text x="2424.7" y="194" textLength="90" lengthAdjust="spacingAndGlyphs">Display State Out</text>
<text x="2425.7" y="378" textLength="34" lengthAdjust="spacingAndGlyphs">Action</text>

<rect x="1709.5" y="30" width="167" height="62.5" fill="#ffffdc" stroke="#000"/>
<text x="1711.5" y="48.7" textLength="133" lengthAdjust="spacingAndGlyphs">Der Wert für das Timeout</text>
<text x="1711.5" y="63.7" textLength="102" lengthAdjust="spacingAndGlyphs">sollte immer 0 sein.</text>
<text x="1711.5" y="78.7" textLength="162.7" lengthAdjust="spacingAndGlyphs">Dieses VI sollte nicht unendlich</text>
<svg x="1709" y="80" width="168" height="12"><text x="2.5" y="13.7" textLength="38" lengthAdjust="spacingAndGlyphs">warten.</text></svg>
<rect x="1921.5" y="10.5" width="462" height="91" fill="#ffffdc" stroke="#000"/>
<text x="1923.5" y="38.5" textLength="411.5" lengthAdjust="spacingAndGlyphs" xml:space="preserve">dass es auf Ereignisse reagiert.  Es wird von LabVIEW zu bestimmten Zeiten mit</text>
<text x="1923.5" y="53.5" textLength="377" lengthAdjust="spacingAndGlyphs">bestimmten Ereignissen aufgerufen. Behandeln Sie Ereignisse, die durch</text>
<text x="1923.5" y="68.5" textLength="401" lengthAdjust="spacingAndGlyphs">Bedienelemente auf dem Frontpanel ausgelöst werden an dieser Stelle durch</text>
<text x="1923.5" y="83.5" textLength="259.5" lengthAdjust="spacingAndGlyphs">Hinzufügen der Ereignisse zu der Ereignisstruktur.</text>
<rect x="2425.5" y="423.5" width="161" height="140" fill="#ffffdc" stroke="#000"/>
<text x="2427.7" y="436" textLength="150" lengthAdjust="spacingAndGlyphs">Wenn Sie "Daten (Ausgang)"</text>
<text x="2427.7" y="451" textLength="23.7" lengthAdjust="spacingAndGlyphs">oder</text>
<text x="2427.7" y="466" textLength="150" lengthAdjust="spacingAndGlyphs">"Anzeigezustand (Ausgang)"</text>
<text x="2427.7" y="481" textLength="67.7" lengthAdjust="spacingAndGlyphs">modifizieren,</text>
<text x="2427.7" y="496" textLength="128.7" lengthAdjust="spacingAndGlyphs">muss der entsprechende</text>
</g>
</svg>
</body>
</html>
